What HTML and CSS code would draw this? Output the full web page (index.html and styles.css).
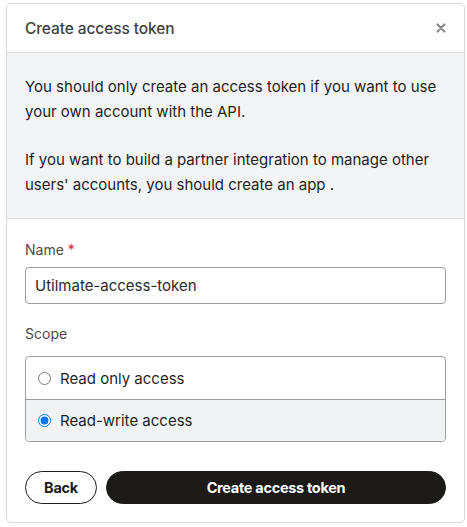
FILE: index.html
```html
<!DOCTYPE html>
<html>
<head>
<meta charset="utf-8">
<link rel="stylesheet" href="styles.css">
</head>
<body>
<div class="modal">
  <div class="modal-header">
    <h2 class="modal-title">Create access token</h2>
    <button class="close-btn" aria-label="Close">
      <svg width="10" height="10" viewBox="0 0 10 10"><path d="M1.5 1.5 L8.5 8.5 M8.5 1.5 L1.5 8.5" stroke="#8a8a8a" stroke-width="2.2" stroke-linecap="round"/></svg>
    </button>
  </div>
  <div class="info">
    <p>You should only create an access token if you want to use your own account with the API.</p>
    <p>If you want to build a partner integration to manage other users' accounts, you should create an app .</p>
  </div>
  <div class="form">
    <label class="field-label">Name <span class="req">*</span></label>
    <div class="text-input">Utilmate-access-token</div>
    <div class="field-label scope-label">Scope</div>
    <div class="radio-group">
      <label class="radio-row"><input type="radio" name="scope"><span>Read only access</span></label>
      <label class="radio-row selected"><input type="radio" name="scope" checked><span>Read-write access</span></label>
    </div>
    <div class="actions">
      <button class="btn btn-back">Back</button>
      <button class="btn btn-primary">Create access token</button>
    </div>
  </div>
</div>
</body>
</html>
```
FILE: styles.css
```css
* { box-sizing: border-box; }
html, body { margin: 0; padding: 0; background: #fff; }
body {
  font-family: Inter, "Noto Sans", sans-serif;
  color: #222;
  padding: 3px 2px 0 6px;
}
.modal {
  width: 459px;
  height: 520px;
  border: 1px solid #d8d8d8;
  border-radius: 5px;
  background: #fff;
  overflow: hidden;
}
.modal-header {
  height: 49px;
  border-bottom: 1px solid #dcdcdc;
  display: flex;
  align-items: center;
  justify-content: space-between;
  padding: 0 18px 0 18px;
}
.modal-title {
  margin: 0;
  font-size: 15.5px;
  font-weight: 500;
  color: #404040;
  letter-spacing: -0.1px;
}
.close-btn {
  border: 0;
  background: none;
  padding: 0;
  width: 10px;
  height: 10px;
  display: flex;
}
.info {
  background: #f3f4f6;
  border-bottom: 1px solid #dcdcdc;
  padding: 21px 18px 21px;
  display: flex;
  flex-direction: column;
  gap: 23px;
  font-size: 15px;
  line-height: 25px;
  color: #1f1f1f;
}
.info p { margin: 0; }
.form {
  padding: 21px 18px 0;
  display: flex;
  flex-direction: column;
}
.field-label {
  font-size: 14px;
  line-height: 20px;
  color: #4a4a4a;
}
.req { color: #e0141e; }
.text-input {
  margin-top: 7px;
  height: 37px;
  border: 1px solid #9c9c9c;
  border-radius: 4px;
  padding: 0 9px;
  display: flex;
  align-items: center;
  font-size: 15px;
  color: #2a2a2a;
}
.scope-label { margin-top: 20px; }
.radio-group {
  margin-top: 12px;
  border: 1px solid #9c9c9c;
  border-radius: 4px;
  overflow: hidden;
}
.radio-row {
  height: 42px;
  display: flex;
  align-items: center;
  padding-left: 11px;
  font-size: 15px;
  color: #1f1f1f;
}
.radio-row + .radio-row { border-top: 1px solid #9c9c9c; }
.radio-row.selected { background: #f2f3f5; }
.radio-row input {
  margin: 0 9px 0 1px;
  width: 13px;
  height: 13px;
}
.actions {
  margin-top: 29px;
  display: flex;
  gap: 9px;
}
.btn {
  height: 33px;
  border-radius: 17px;
  font-family: Inter, "Noto Sans", sans-serif;
  font-size: 14.5px;
  font-weight: 700;
  letter-spacing: -0.3px;
}
.btn-back {
  width: 72px;
  background: #fff;
  border: 1px solid #1c1c1c;
  color: #1c1c1c;
}
.btn-primary {
  flex: 1;
  background: #1c1a17;
  border: 1px solid #1c1a17;
  color: #fff;
}
```
